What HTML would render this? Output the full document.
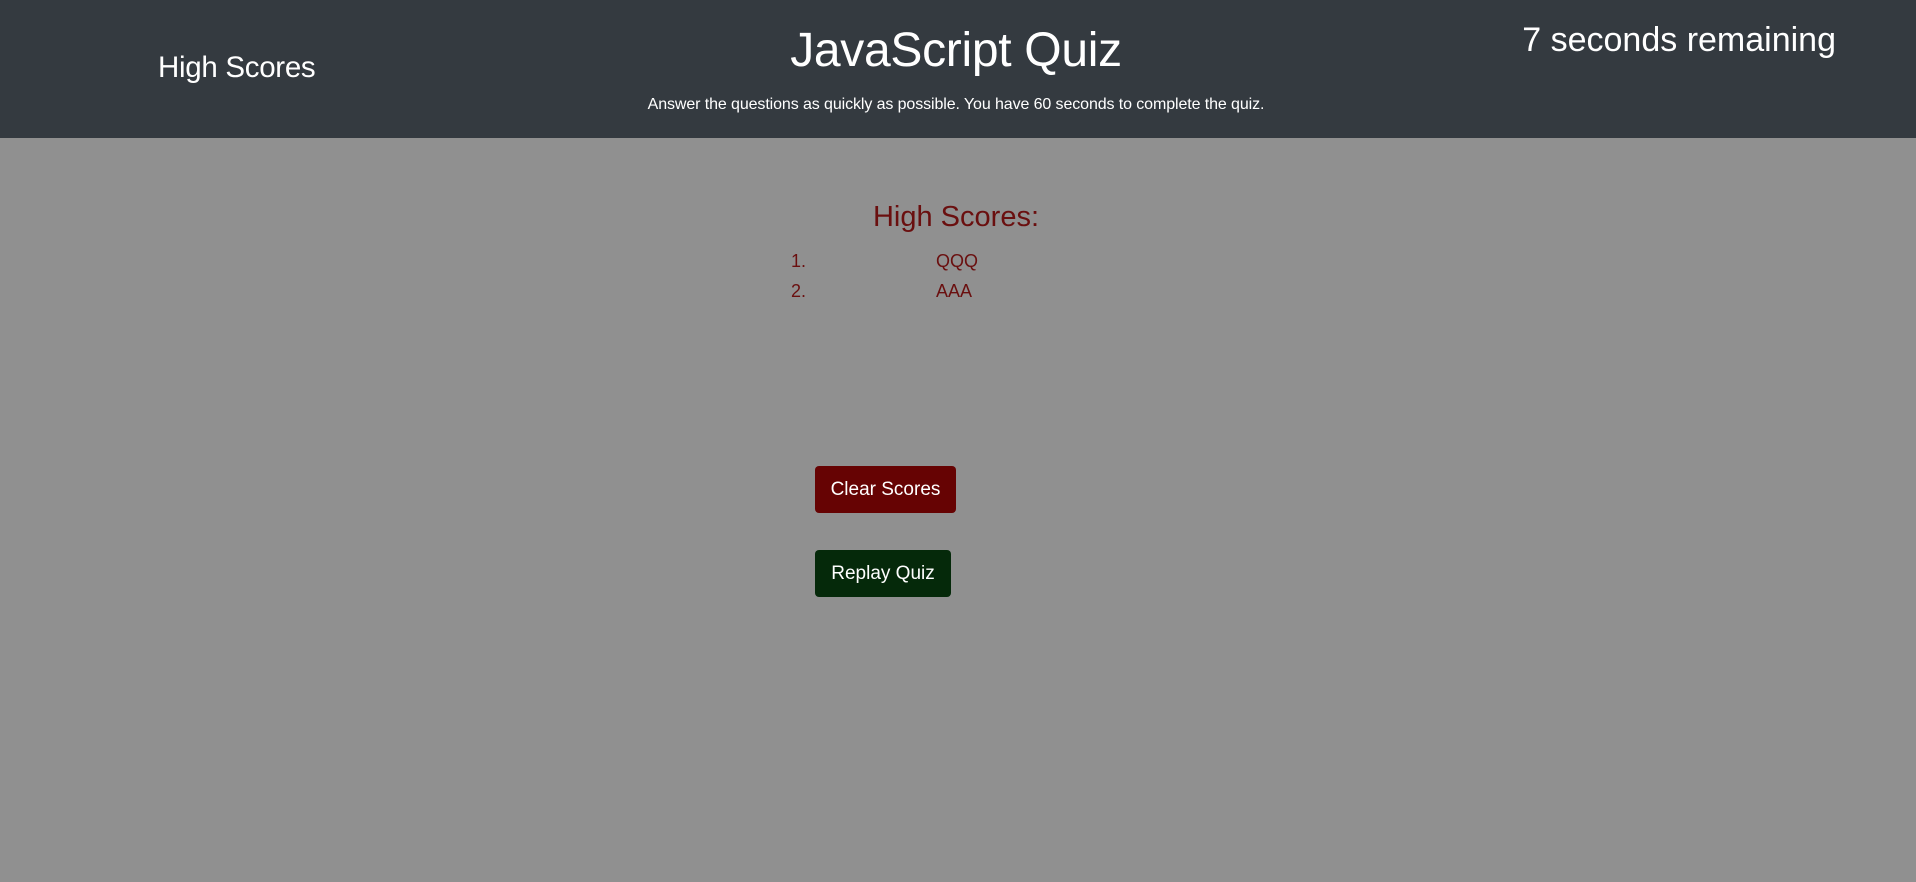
<!DOCTYPE html>
<html><head><style>
*{margin:0;padding:0;box-sizing:border-box}
body{width:1916px;height:882px;background:#909090;font-family:"Liberation Sans",sans-serif;position:relative;overflow:hidden}
header{position:absolute;left:0;top:0;width:1916px;height:138px;background:#343a40;color:#fff}
.t{position:absolute;white-space:nowrap;line-height:1}
.btn{position:absolute;left:815px;height:47px;border-radius:4px;color:#fff;font-size:19px;display:flex;align-items:center;justify-content:center}
.red{color:#6a0f0f}
</style></head><body>
<header>
<div class="t" style="left:158px;top:53px;font-size:29.5px;letter-spacing:-0.3px">High Scores</div>
<div class="t" style="left:0;width:1912px;text-align:center;top:27px;font-size:48px;letter-spacing:-0.3px">JavaScript Quiz</div>
<div class="t" style="left:0;width:1912px;text-align:center;top:97px;font-size:16px;letter-spacing:-0.1px">Answer the questions as quickly as possible. You have 60 seconds to complete the quiz.</div>
<div class="t" style="right:80px;top:23px;font-size:34px;letter-spacing:0px">7 seconds remaining</div>
</header>
<div class="t red" style="left:0;width:1912px;text-align:center;top:203px;font-size:29px">High Scores:</div>
<div class="t red" style="left:791px;top:252px;font-size:18px">1.</div>
<div class="t red" style="left:936px;top:252px;font-size:18px">QQQ</div>
<div class="t red" style="left:791px;top:282px;font-size:18px">2.</div>
<div class="t red" style="left:936px;top:282px;font-size:18px">AAA</div>
<div class="btn" style="top:466px;width:141px;background:#660303">Clear Scores</div>
<div class="btn" style="top:550px;width:136px;background:#05290a">Replay Quiz</div>
</body></html>
